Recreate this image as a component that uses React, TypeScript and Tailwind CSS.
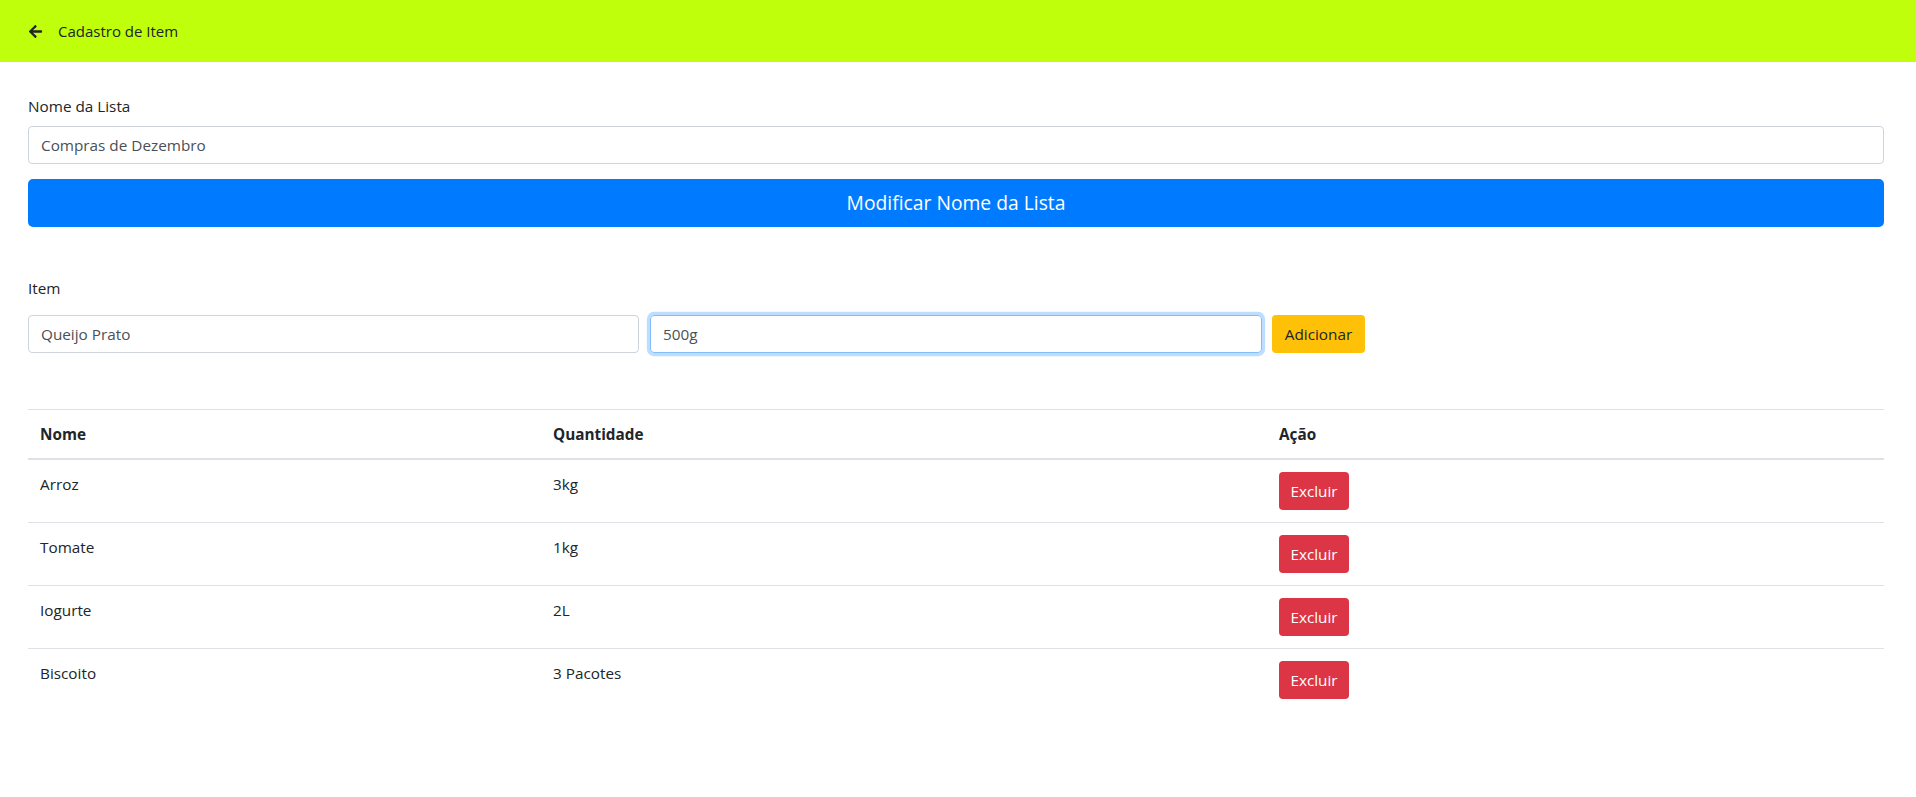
import { FaArrowLeft } from 'react-icons/fa';

const items = [
    { nome: 'Arroz', quantidade: '3kg' },
    { nome: 'Tomate', quantidade: '1kg' },
    { nome: 'Iogurte', quantidade: '2L' },
    { nome: 'Biscoito', quantidade: '3 Pacotes' },
];

export default function App() {
    return (
        <div
            className="min-h-screen bg-white text-[#212529] text-[15.3px] leading-6"
            style={{ fontFamily: '"Open Sans", "Noto Sans", sans-serif' }}
        >
            <header className="h-[62px] bg-[#c0ff0b] flex items-center pl-[28px]">
                <FaArrowLeft className="text-[#212529]" size={15} />
                <span className="ml-[15px] text-[15px]">Cadastro de Item</span>
            </header>

            <main className="pl-[28px] pr-[32px] pt-[32px]">
                <label className="block mb-2">Nome da Lista</label>
                <input
                    type="text"
                    defaultValue="Compras de Dezembro"
                    className="block w-full h-[38px] px-3 border border-[#ced4da] rounded-[4px] text-[#495057] outline-none"
                />
                <button
                    type="button"
                    className="mt-[15px] w-full h-[48px] bg-[#007bff] text-white text-[19.3px] rounded-[5px]"
                >
                    Modificar Nome da Lista
                </button>

                <label className="block mt-[49px] mb-[15px]">Item</label>
                <div className="flex items-center">
                    <input
                        type="text"
                        defaultValue="Queijo Prato"
                        className="w-[611px] h-[38px] px-3 border border-[#ced4da] rounded-[4px] text-[#495057] outline-none"
                    />
                    <input
                        type="text"
                        defaultValue="500g"
                        className="ml-[11px] w-[612px] h-[38px] px-3 border border-[#80bdff] rounded-[4px] text-[#495057] outline-none shadow-[0_0_0_3.2px_rgba(0,123,255,0.25)]"
                    />
                    <button
                        type="button"
                        className="ml-[10px] w-[93px] h-[38px] bg-[#ffc107] text-[#212529] rounded-[4px]"
                    >
                        Adicionar
                    </button>
                </div>

                <table className="mt-[56px] w-full border-collapse text-left">
                    <thead>
                        <tr>
                            <th className="w-[513px] px-3 py-3 border-t border-b-2 border-[#dee2e6] font-bold">
                                Nome
                            </th>
                            <th className="w-[726px] px-3 py-3 border-t border-b-2 border-[#dee2e6] font-bold">
                                Quantidade
                            </th>
                            <th className="px-3 py-3 border-t border-b-2 border-[#dee2e6] font-bold">
                                Ação
                            </th>
                        </tr>
                    </thead>
                    <tbody>
                        {items.map((item) => (
                            <tr key={item.nome}>
                                <td className="px-3 py-3 border-t border-[#dee2e6] align-top">{item.nome}</td>
                                <td className="px-3 py-3 border-t border-[#dee2e6] align-top">
                                    {item.quantidade}
                                </td>
                                <td className="px-3 py-3 border-t border-[#dee2e6] align-top">
                                    <button
                                        type="button"
                                        className="h-[38px] w-[70px] bg-[#dc3545] text-white rounded-[4px]"
                                    >
                                        Excluir
                                    </button>
                                </td>
                            </tr>
                        ))}
                    </tbody>
                </table>
            </main>
        </div>
    );
}
